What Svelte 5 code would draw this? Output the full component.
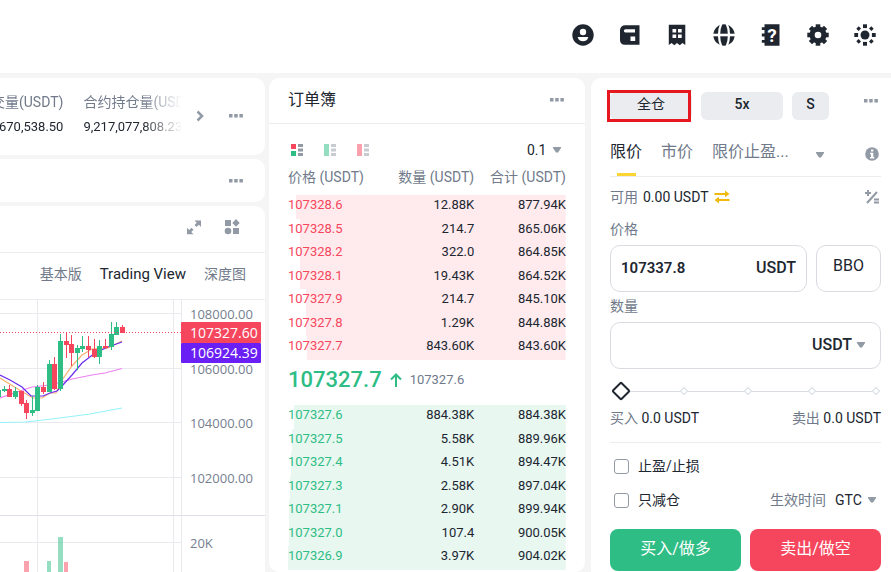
<script lang="ts">
  type Candle = { x: number; up: boolean; top: number; bottom: number; high: number; low: number };

  // chart coordinates, one candle every ~6px
  const candles: Candle[] = [
    { x: -4, up: true, top: 90, bottom: 97, high: 90, low: 97 },
    { x: 2, up: true, top: 89, bottom: 91, high: 86, low: 92 },
    { x: 7, up: false, top: 89, bottom: 97, high: 85, low: 97 },
    { x: 13, up: true, top: 91, bottom: 97, high: 87, low: 99 },
    { x: 19, up: false, top: 91, bottom: 104, high: 91, low: 106 },
    { x: 24, up: false, top: 103, bottom: 113, high: 100, low: 119 },
    { x: 30, up: true, top: 110, bottom: 113, high: 96, low: 116 },
    { x: 35, up: true, top: 87, bottom: 111, high: 85, low: 111 },
    { x: 41, up: false, top: 87, bottom: 92, high: 82, low: 94 },
    { x: 47, up: true, top: 64, bottom: 92, high: 60, low: 92 },
    { x: 52, up: false, top: 64, bottom: 89, high: 57, low: 90 },
    { x: 58, up: true, top: 41, bottom: 89, high: 34, low: 91 },
    { x: 64, up: false, top: 41, bottom: 45, high: 32, low: 58 },
    { x: 69, up: false, top: 44, bottom: 53, high: 35, low: 66 },
    { x: 75, up: true, top: 48, bottom: 53, high: 45, low: 70 },
    { x: 80, up: true, top: 46, bottom: 49, high: 36, low: 52 },
    { x: 86, up: false, top: 46, bottom: 50, high: 36, low: 57 },
    { x: 92, up: false, top: 49, bottom: 57, high: 39, low: 58 },
    { x: 97, up: true, top: 46, bottom: 57, high: 40, low: 64 },
    { x: 103, up: false, top: 46, bottom: 48, high: 39, low: 49 },
    { x: 109, up: true, top: 34, bottom: 47, high: 22, low: 50 },
    { x: 114, up: true, top: 27, bottom: 35, high: 22, low: 35 },
    { x: 120, up: false, top: 27, bottom: 33, high: 25, low: 33 },
  ];

  const volumes = [
    { x: 24, width: 5, top: 261, up: false },
    { x: 47, width: 4, top: 261, up: true },
    { x: 58, width: 5, top: 237, up: true },
    { x: 64, width: 4, top: 262, up: false },
  ];

  const axis = [
    { y: 13.5, label: "108000.00" },
    { y: 68.5, label: "106000.00" },
    { y: 122.5, label: "104000.00" },
    { y: 177.5, label: "102000.00" },
    { y: 242.5, label: "20K" },
  ];

  const asks = [
    ["107328.6", "12.88K", "877.94K"],
    ["107328.5", "214.7", "865.06K"],
    ["107328.2", "322.0", "864.85K"],
    ["107328.1", "19.43K", "864.52K"],
    ["107327.9", "214.7", "845.10K"],
    ["107327.8", "1.29K", "844.88K"],
    ["107327.7", "843.60K", "843.60K"],
  ];
  const bids = [
    ["107327.6", "884.38K", "884.38K"],
    ["107327.5", "5.58K", "889.96K"],
    ["107327.4", "4.51K", "894.47K"],
    ["107327.3", "2.58K", "897.04K"],
    ["107327.1", "2.90K", "899.94K"],
    ["107327.0", "107.4", "900.05K"],
    ["107326.9", "3.97K", "904.02K"],
  ];
  const maxTotal = 904.02;

  // width of the depth bar behind a row
  const depth = (total: string) => (parseFloat(total) / maxTotal) * 100;

  const bookModes = [
    { label: "全部", top: "#f6465d", bottom: "#2ebd85", dim: false },
    { label: "买单", top: "#2ebd85", bottom: "#2ebd85", dim: true },
    { label: "卖单", top: "#f6465d", bottom: "#f6465d", dim: true },
  ];

  let price = $state("107337.8");
  let amount = $state("");
  let percent = $state(0);
  let tpsl = $state(false);
  let reduceOnly = $state(false);
</script>

{#snippet more()}
  <button class="icon-btn" aria-label="更多">
    <svg width="16" height="16" viewBox="0 0 16 16" fill="currentColor">
      <path d="M1 6h3.500v3.500H1zM6.200 6h3.500v3.500H6.200zM11.400 6h3.500v3.500h-3.500z" />
    </svg>
  </button>
{/snippet}

{#snippet caret()}
  <svg class="caret" width="8" height="6" viewBox="0 0 8 6" fill="currentColor">
    <path d="M0 0h8v1L5 5.500H3L0 1z" />
  </svg>
{/snippet}

<div class="page">
  <header>
    <button class="nav-btn" aria-label="账户">
      <svg viewBox="0 0 24 24">
        <circle cx="12" cy="12" r="10.700" fill="currentColor" />
        <circle cx="12" cy="9" r="3.200" fill="#fff" />
        <path d="M6.700 14h10.600c-.6 3-2.600 4.300-5.300 4.300S7.300 17 6.700 14z" fill="#fff" />
      </svg>
    </button>
    <button class="nav-btn" aria-label="钱包">
      <svg viewBox="0 0 24 24">
        <path d="M7 2.300h14.500v19.400H6.500A4.500 4.500 0 0 1 2 17.200V7.300a5 5 0 0 1 5-5z" fill="currentColor" />
        <path d="M7.500 6.200H17v3.300H7.500a1.650 1.650 0 0 1 0-3.300zM12.500 13.500h4.700V18h-4.700z" fill="#fff" />
      </svg>
    </button>
    <button class="nav-btn" aria-label="订单">
      <svg viewBox="0 0 24 24">
        <path d="M3.800 1.700h16.500V22l-2.800-2-2.700 2.200L12 20l-2.700 2.200L6.600 20l-2.800 2z" fill="currentColor" />
        <path d="M7.500 6h3.700v3.500H7.500zM13 6h3.700v3.500H13zM7.500 11.500h3.700V15H7.500zM13 11.500h3.700V15H13z" fill="#fff" />
      </svg>
    </button>
    <button class="nav-btn" aria-label="语言">
      <svg viewBox="0 0 24 24">
        <circle cx="12" cy="12" r="10.700" fill="currentColor" />
        <path d="M1 12h22" stroke="#fff" stroke-width="2.600" />
        <path d="M9.500 0Q7 5.500 7 12t2.500 12M14.500 0Q17 5.500 17 12t-2.500 12" stroke="#fff" stroke-width="2.200" fill="none" />
      </svg>
    </button>
    <button class="nav-btn" aria-label="帮助">
      <svg viewBox="0 0 24 24">
        <path d="M5.500 1.300h15v21.400h-15v-3H2.800V17h2.700v-3.500H2.800v-3h2.700V7H2.800V4.200h2.700z" fill="currentColor" />
        <text x="13" y="19" text-anchor="middle" class="help-mark">?</text>
      </svg>
    </button>
    <button class="nav-btn" aria-label="设置">
      <svg viewBox="0 0 24 24">
        <g fill="currentColor">
          <circle cx="12" cy="12" r="8.500" />
          {#each [0, 45, 90, 135] as angle}
            <rect x="9.700" y="1.300" width="4.600" height="21.400" transform="rotate({angle} 12 12)" />
          {/each}
        </g>
        <circle cx="12" cy="12" r="3.300" fill="#fff" />
      </svg>
    </button>
    <button class="nav-btn" aria-label="主题">
      <svg viewBox="0 0 24 24" fill="currentColor">
        <circle cx="12" cy="12" r="4.500" />
        {#each [0, 90, 180, 270] as angle}
          <rect x="10" y="1.300" width="4" height="3.800" transform="rotate({angle} 12 12)" />
          <path d="M16 5.600 18.300 3.300l2.400 2.400L18.400 8z" transform="rotate({angle} 12 12)" />
        {/each}
      </svg>
    </button>
  </header>

  <main>
    <div class="left">
      <section class="card ticker">
        <div class="stats">
          <dl>
            <dt>交量(USDT)</dt>
            <dd>670,538.50</dd>
          </dl>
          <dl>
            <dt>合约持仓量(USDT)</dt>
            <dd>9,217,077,808.23</dd>
          </dl>
        </div>
        <button class="icon-btn" aria-label="下一个">
          <svg width="16" height="16" viewBox="0 0 16 16" fill="none" stroke="currentColor" stroke-width="2.500">
            <path d="M5.500 3.500 10 8l-4.500 4.500" />
          </svg>
        </button>
        {@render more()}
      </section>

      <section class="card strip">{@render more()}</section>

      <section class="card chart">
        <div class="toolbar">
          <button class="icon-btn" aria-label="全屏">
            <svg width="16" height="16" viewBox="0 0 16 16" fill="currentColor">
              <path d="M8.500 1.500H15V8l-2.200-2.200-2.300 2.300-2-2 2.200-2.300zM1 8.800l2.200 2.200 2.300-2.300 2 2L5.300 13l2.200 2.300H1z" />
            </svg>
          </button>
          <button class="icon-btn" aria-label="布局">
            <svg width="16" height="16" viewBox="0 0 16 16" fill="currentColor">
              <path d="M1 1h6v6H1zM9 9h6v6H9zM12 0l3.700 3.900L12 7.700 8.300 3.900z" />
              <circle cx="4" cy="12" r="3.300" />
            </svg>
          </button>
        </div>
        <nav class="views">
          <a href="#basic">基本版</a>
          <a href="#tv" class="active">Trading View</a>
          <a href="#depth">深度图</a>
        </nav>
        <svg class="plot" viewBox="0 0 265 272">
          <g stroke="#e9eaee">
            {#each axis as tick}
              <path d="M0 {tick.y}H181" />
            {/each}
            <path d="M37.500 0V272M173.500 0V272M181.500 0V272" />
            <path d="M0 215.500H265" stroke="#dfdfeb" />
          </g>
          {#each volumes as v}
            <rect x={v.x} y={v.top} width={v.width} height={272 - v.top} class={v.up ? "up" : "down"} opacity="0.5" />
          {/each}
          <g fill="none" stroke-width="1.200">
            <path d="M0 122.500 25 122l27-3 38-5 32-6" stroke="#93f3fb" />
            <path d="M0 98l20-7 12-4 18-2 12-3 10-3 20-4 13-2 17-4.500" stroke="#ee82f3" />
            <path d="M0 78l21 13 12 7h9l8-5h6l6-13 10-14 10-11 10-6 16-1 14-7" stroke="#f7b26f" />
            <path d="M0 75l10 5 12 7 9 9h12l7-3 7-2 5-5 10-11 10-12 13-10 13-6 14-5" stroke="#6a2df0" />
          </g>
          {#each candles as c}
            <g class={c.up ? "up" : "down"}>
              <rect x={c.x + 2} y={c.high} width="1" height={c.low - c.high} />
              <rect x={c.x} y={c.top} width="5" height={c.bottom - c.top} />
            </g>
          {/each}
          <path d="M0 32.500H181" stroke="#f6465d" stroke-dasharray="1 2" />
          {#each axis as tick}
            <text x="190" y={tick.y + 5} class="tick">{tick.label}</text>
          {/each}
          <rect x="181" y="22" width="80" height="21" rx="1" fill="#f6465d" />
          <rect x="181" y="43" width="80" height="20" rx="1" fill="#6a1ff5" />
          <text x="190" y="38" class="tag">107327.60</text>
          <text x="190" y="58" class="tag">106924.39</text>
        </svg>
      </section>
    </div>

    <section class="card book">
      <div class="book-title">
        <h2>订单簿</h2>
        {@render more()}
      </div>
      <div class="book-body">
        <div class="book-tools">
          {#each bookModes as mode}
            <button class="mode" class:dim={mode.dim} aria-label={mode.label}>
              <svg width="12" height="12" viewBox="0 0 12 12">
                <rect width="5" height={mode.dim ? 6 : 5} fill={mode.top} />
                <rect y={mode.dim ? 6 : 7} width="5" height={mode.dim ? 6 : 5} fill={mode.bottom} />
                <path d="M7 0h5v3H7zM7 4.500h5v3H7zM7 9h5v3H7z" fill="#929aa5" />
              </svg>
            </button>
          {/each}
          <label class="picker">
            <select aria-label="精度">
              <option>0.1</option>
              <option>1</option>
            </select>
            {@render caret()}
          </label>
        </div>
        <table>
          <thead>
            <tr>
              <th>价格 (USDT)</th>
              <th>数量 (USDT)</th>
              <th>合计 (USDT)</th>
            </tr>
          </thead>
          <tbody class="asks">
            {#each asks as [p, size, total]}
              <tr style="--depth: {depth(total)}%">
                <td>{p}</td>
                <td>{size}</td>
                <td>{total}</td>
              </tr>
            {/each}
          </tbody>
        </table>
        <div class="last">
          <strong>107327.7</strong>
          <svg width="12" height="16" viewBox="0 0 12 16" fill="none" stroke="currentColor" stroke-width="2">
            <path d="M6 15V3M1 7.500l5-5 5 5" />
          </svg>
          <span>107327.6</span>
        </div>
        <table>
          <tbody class="bids">
            {#each bids as [p, size, total]}
              <tr style="--depth: {depth(total)}%">
                <td>{p}</td>
                <td>{size}</td>
                <td>{total}</td>
              </tr>
            {/each}
          </tbody>
        </table>
      </div>
    </section>

    <section class="card order">
      <div class="margin-row">
        <button class="chip marked">全仓</button>
        <button class="chip">5x</button>
        <button class="chip small">S</button>
        {@render more()}
      </div>

      <div class="tabs">
        <button class="tab active">限价</button>
        <button class="tab">市价</button>
        <button class="tab">限价止盈...</button>
        <button class="tab-more" aria-label="更多类型">{@render caret()}</button>
        <button class="icon-btn info" aria-label="说明">
          <svg width="14" height="14" viewBox="0 0 14 14">
            <circle cx="7" cy="7" r="6.800" fill="currentColor" />
            <path d="M6 2.500h2.300v2H6zM5 5.700h3.300v4.200h1v1.600H5V9.900h1V7.300H5z" fill="#fff" />
          </svg>
        </button>
      </div>

      <div class="line available">
        <span class="muted">可用</span>
        <span>0.00 USDT</span>
        <button class="swap" aria-label="划转">
          <svg width="16" height="14" viewBox="0 0 16 14" fill="currentColor">
            <path d="M.5 3H11V.5l4.500 3.500L11 7.300V5H.5zM15.500 9H5V6.700L.5 10 5 13.500V11h10.500z" />
          </svg>
        </button>
        <button class="icon-btn info" aria-label="计算器">
          <svg width="14" height="14" viewBox="0 0 14 14" fill="none" stroke="currentColor" stroke-width="2">
            <path d="M0 3h6M3 0v6M2 13 12 2M9 9.500h5M9 12.500h5" />
          </svg>
        </button>
      </div>

      <label class="field-label" for="price">价格</label>
      <div class="price-row">
        <div class="field">
          <input id="price" type="text" bind:value={price} />
          <span class="unit">USDT</span>
        </div>
        <button class="bbo">BBO</button>
      </div>

      <label class="field-label second" for="amount">数量</label>
      <div class="field">
        <input id="amount" type="text" bind:value={amount} />
        <label class="picker unit">
          <select aria-label="单位">
            <option>USDT</option>
            <option>BTC</option>
          </select>
          {@render caret()}
        </label>
      </div>

      <div class="slider">
        <div class="marks">
          <i></i><i></i><i></i><i></i><i></i>
        </div>
        <input type="range" min="0" max="100" bind:value={percent} aria-label="数量百分比" />
      </div>

      <div class="line totals">
        <div><span class="muted">买入</span> 0.0 USDT</div>
        <div><span class="muted">卖出</span> 0.0 USDT</div>
      </div>

      <div class="options">
        <label class="check"><input type="checkbox" bind:checked={tpsl} />止盈/止损</label>
        <div class="line">
          <label class="check"><input type="checkbox" bind:checked={reduceOnly} />只减仓</label>
          <label class="picker tif">
            <span class="muted">生效时间</span>
            <select>
              <option>GTC</option>
              <option>IOC</option>
              <option>FOK</option>
            </select>
            {@render caret()}
          </label>
        </div>
      </div>

      <div class="actions">
        <button class="buy">买入/做多</button>
        <button class="sell">卖出/做空</button>
      </div>
    </section>
  </main>
</div>

<style>
  :global(body) {
    background: #f5f5f5;
  }
  .page {
    min-height: 100vh;
    display: flex;
    flex-direction: column;
    overflow: hidden;
    color: #202630;
    font: 14px/20px Roboto, "Noto Sans CJK SC", sans-serif;
  }
  .page * {
    box-sizing: border-box;
  }
  button,
  input,
  select {
    margin: 0;
    padding: 0;
    border: 0;
    background: none;
    color: inherit;
    font: inherit;
  }
  button {
    cursor: pointer;
  }
  svg {
    display: block;
  }
  .muted {
    color: #707a8a;
  }

  header {
    display: flex;
    align-items: center;
    justify-content: flex-end;
    gap: 23px;
    height: 73px;
    padding: 0 14px 3px 0;
    background: #fff;
  }
  .nav-btn {
    width: 24px;
    height: 24px;
  }
  .help-mark {
    fill: #fff;
    font: 700 19px Roboto, sans-serif;
  }

  main {
    flex: 1;
    display: grid;
    grid-template-columns: minmax(0, 265fr) minmax(0, 316fr) minmax(0, 302fr);
    column-gap: 4px;
    padding-top: 5px;
  }
  .card {
    background: #fff;
    border-radius: 10px;
  }
  .icon-btn {
    flex: none;
    width: 16px;
    color: #929aa5;
  }
  .caret {
    flex: none;
    color: #929aa5;
  }

  .left {
    display: flex;
    flex-direction: column;
    gap: 4px;
  }
  .left .card {
    border-radius: 0 10px 10px 0;
  }
  .ticker {
    display: flex;
    align-items: center;
    height: 77px;
    padding: 0 21px 2px 0;
  }
  .ticker .icon-btn {
    margin-left: 20px;
  }
  .ticker .stats + .icon-btn {
    margin-left: 10px;
  }
  .stats {
    flex: 1;
    display: flex;
    gap: 20px;
    overflow: hidden;
    white-space: nowrap;
    mask-image: linear-gradient(to left, transparent, #000 40px);
  }
  dl {
    margin: 0;
    flex: none;
  }
  dl:first-child {
    margin-left: -9px;
    text-align: right;
  }
  dt {
    color: #707a8a;
    line-height: 24px;
  }
  dd {
    margin: 0;
    padding: 1px 0 2px;
    font-size: 13px;
    line-height: 24px;
  }
  .strip {
    display: flex;
    align-items: center;
    justify-content: flex-end;
    height: 43px;
    padding-right: 21px;
  }
  .chart {
    flex: 1;
    overflow: hidden;
  }
  .left .chart {
    border-bottom-right-radius: 0;
  }
  .toolbar,
  .views {
    display: flex;
    align-items: center;
    justify-content: flex-end;
    height: 47px;
    border-bottom: 1px solid #eaecef;
  }
  .toolbar {
    gap: 22px;
    padding: 0 25px 4px 0;
  }
  .views {
    gap: 18px;
    padding: 0 19px 4px 0;
  }
  .views a {
    color: #707a8a;
    text-decoration: none;
    white-space: nowrap;
  }
  .views .active {
    color: #202630;
    font-size: 15px;
  }
  .plot {
    width: 100%;
    height: auto;
  }
  .up {
    fill: #2ebd85;
  }
  .down {
    fill: #f6465d;
  }
  .tick {
    fill: #76808f;
    font: 13px "Open Sans", sans-serif;
  }
  .tag {
    fill: #fff;
    font: 500 14px "Open Sans", sans-serif;
  }

  .book-title {
    display: flex;
    align-items: center;
    justify-content: space-between;
    height: 46px;
    padding: 0 20px 2px 19px;
    border-bottom: 1px solid #eaecef;
  }
  h2 {
    margin: 0;
    font-size: 16px;
    font-weight: 400;
  }
  .book-body {
    padding: 16px 19px 0;
  }
  .book-tools {
    display: flex;
    align-items: center;
    gap: 21px;
    height: 20px;
    padding: 0 5px 0 3px;
    margin-bottom: 7px;
  }
  .mode.dim {
    opacity: 0.5;
  }
  .picker {
    display: flex;
    align-items: center;
    gap: 6px;
  }
  .book-tools .picker {
    margin-left: auto;
  }
  select {
    appearance: none;
    outline: none;
    cursor: pointer;
  }
  table {
    width: 100%;
    table-layout: fixed;
    border-collapse: collapse;
  }
  th {
    height: 28px;
    padding: 0;
    color: #707a8a;
    font-weight: 400;
    text-align: right;
    vertical-align: top;
    white-space: nowrap;
  }
  td {
    padding: 0 0 3px;
    font-size: 13px;
    line-height: 20px;
    text-align: right;
  }
  tr:nth-child(odd) td {
    padding-bottom: 4px;
  }
  th:first-child,
  td:first-child {
    width: 35%;
    text-align: left;
  }
  th:nth-child(2),
  td:nth-child(2) {
    width: 32%;
  }
  tbody tr {
    background: linear-gradient(var(--tint), var(--tint)) right / var(--depth) 100% no-repeat;
  }
  .asks {
    --tint: #ffebed;
  }
  .bids {
    --tint: #e8f7f0;
  }
  .asks td:first-child {
    color: #f6465d;
  }
  .bids td:first-child {
    color: #2ebd85;
  }
  .last {
    display: flex;
    align-items: center;
    gap: 8px;
    padding-bottom: 5px;
    color: #2ebd85;
    line-height: 40px;
  }
  .last strong {
    font-size: 22px;
    font-weight: 500;
  }
  .last span {
    color: #707a8a;
    font-size: 13px;
  }

  .order {
    margin-left: 2px;
    padding: 14px 10px 1px 19px;
    border-radius: 10px 0 0 0;
  }
  .margin-row {
    display: flex;
    gap: 9px;
  }
  .chip {
    position: relative;
    width: 82px;
    height: 28px;
    padding-bottom: 4px;
    border-radius: 6px;
    background: #eaecef;
    font-weight: 500;
  }
  .chip.small {
    width: 37px;
  }
  /* highlight frame over the margin mode chip */
  .marked {
    font-weight: 400;
  }
  .marked::after {
    content: "";
    position: absolute;
    inset: -2px 1px -2px -3px;
    border: 3px solid #e5171f;
  }
  .order .icon-btn {
    margin-left: auto;
    margin-right: 2px;
  }
  .margin-row .icon-btn {
    height: 18px;
  }
  .tabs {
    display: flex;
    align-items: flex-start;
    gap: 19px;
    margin-top: 12px;
    padding-top: 8px;
    height: 45px;
    border-bottom: 1px solid #eaecef;
  }
  .tab {
    position: relative;
    height: 36px;
    padding-bottom: 12px;
    color: #707a8a;
    font-size: 16px;
    line-height: 24px;
    white-space: nowrap;
  }
  .tab.active {
    color: #202630;
  }
  .tab.active::after {
    content: "";
    position: absolute;
    left: 7px;
    bottom: 0;
    width: 19px;
    height: 3px;
    background: #fcd535;
  }
  .tab-more {
    margin-left: 8px;
    padding-top: 12px;
  }
  .info {
    width: 14px;
  }
  .tabs .info {
    padding-top: 7px;
  }
  .line {
    display: flex;
    align-items: center;
    justify-content: space-between;
  }
  .available {
    gap: 5px;
    margin-top: 10px;
    height: 20px;
  }
  .swap {
    color: #f0b90b;
  }
  .field-label {
    display: block;
    margin: 12px 0 6px;
    color: #707a8a;
  }
  .field-label.second {
    margin-top: 4px;
  }
  .price-row {
    display: flex;
    gap: 9px;
  }
  .field {
    flex: 1;
    display: flex;
    align-items: center;
    min-width: 0;
    height: 47px;
    padding: 0 10px 2px;
    border: 1px solid #d8dce1;
    border-radius: 10px;
  }
  .field input {
    flex: 1;
    min-width: 0;
    outline: none;
    font-size: 15px;
    font-weight: 600;
  }
  .unit {
    font-size: 16px;
    font-weight: 500;
  }
  .picker.unit {
    padding-right: 5px;
    gap: 5px;
  }
  .bbo {
    width: 65px;
    padding-bottom: 5px;
    border: 1px solid #d8dce1;
    border-radius: 10px;
    font-size: 16px;
  }

  .slider {
    position: relative;
    height: 18px;
    margin: 13px -1px 8px 4px;
  }
  .marks {
    display: flex;
    align-items: center;
    justify-content: space-between;
    height: 18px;
    padding: 0 3px;
    background: linear-gradient(#d8dce1, #d8dce1) center / calc(100% - 12px) 1px no-repeat;
  }
  .marks i {
    width: 6px;
    height: 6px;
    border: 1px solid #d8dce1;
    background: #fff;
    transform: rotate(45deg);
  }
  input[type="range"] {
    position: absolute;
    inset: 0;
    width: 100%;
    height: 18px;
    appearance: none;
  }
  input[type="range"]::-webkit-slider-thumb {
    appearance: none;
    box-sizing: border-box;
    width: 14px;
    height: 14px;
    border: 2px solid #202630;
    border-radius: 2px;
    background: #fff;
    transform: rotate(45deg);
  }
  .totals {
    padding-bottom: 14px;
    border-bottom: 1px solid #eaecef;
  }
  .options {
    display: flex;
    flex-direction: column;
    gap: 14px;
    padding: 13px 5px 19px 4px;
  }
  .check {
    display: flex;
    align-items: center;
    gap: 9px;
  }
  .check input {
    appearance: none;
    width: 15px;
    height: 15px;
    border: 1px solid #929aa5;
    border-radius: 3px;
  }
  .check input:checked {
    background: #202630;
  }
  .tif .muted {
    margin-right: 3px;
  }
  .actions {
    display: flex;
    gap: 9px;
  }
  .actions button {
    flex: 1;
    height: 42px;
    padding-bottom: 3px;
    border-radius: 8px;
    color: #fff;
    font-size: 16px;
  }
  .buy {
    background: #2ebd85;
  }
  .sell {
    background: #f6465d;
  }
</style>
